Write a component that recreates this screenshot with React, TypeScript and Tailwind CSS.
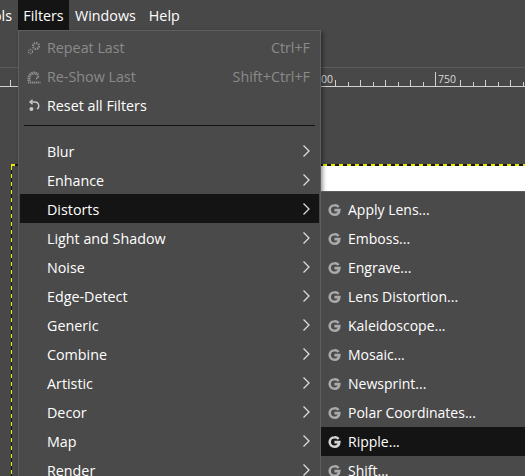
const font = "font-['Open_Sans','Noto_Sans',sans-serif]"

const filterItems = ['Blur', 'Enhance', 'Distorts', 'Light and Shadow', 'Noise', 'Edge-Detect', 'Generic', 'Combine', 'Artistic', 'Decor', 'Map', 'Render']
const distortItems = ['Apply Lens...', 'Emboss...', 'Engrave...', 'Lens Distortion...', 'Kaleidoscope...', 'Mosaic...', 'Newsprint...', 'Polar Coordinates...', 'Ripple...', 'Shift...']

function GimpG({ active }: { active: boolean }) {
  return (
    <svg width="13" height="12" viewBox="0 0 13 12" fill="none" className="shrink-0">
      <path d="M10.6 3A4.6 4.6 0 0 0 6.6 1.3C3.9 1.3 1.7 3.4 1.7 6s2.1 4.7 4.8 4.7c2.6 0 4.6-1.7 4.8-4.6H6.4" stroke={active ? '#d4d4d4' : '#aaaaaa'} strokeWidth="2.6" />
    </svg>
  )
}

function Chevron() {
  return (
    <svg width="8" height="14" viewBox="0 0 8 14" fill="none" className="shrink-0">
      <path d="M1.5 1.5l5.5 5.5-5.5 5.5" stroke="#dcdcdc" strokeWidth="1.3" />
    </svg>
  )
}

function GearIcon() {
  return (
    <svg width="14" height="14" viewBox="0 0 14 14" fill="none">
      <circle cx="9" cy="5" r="3" stroke="#8a8a8a" strokeWidth="2.2" strokeDasharray="1.5 0.8" />
      <circle cx="3.5" cy="10.5" r="2" stroke="#8a8a8a" strokeWidth="1.5" strokeDasharray="1.2 0.8" />
    </svg>
  )
}

function ReshowIcon() {
  return (
    <svg width="14" height="14" viewBox="0 0 14 14" fill="none">
      <path d="M2 11V8a5 5 0 0 1 5-5 5 5 0 0 1 4 2" stroke="#8e8e8e" strokeWidth="3" strokeDasharray="1.4 0.6" />
      <path d="M1 12.5h12.5" stroke="#8e8e8e" strokeWidth="2" strokeDasharray="1.4 0.6" />
      <path d="M9 9l3-3" stroke="#8e8e8e" strokeWidth="1.5" />
    </svg>
  )
}

function ResetIcon() {
  return (
    <svg width="14" height="14" viewBox="0 0 14 14" fill="none">
      <path d="M3 3h4.8a3.8 3.8 0 0 1 2.2 7" stroke="#c8c8c8" strokeWidth="1.4" />
      <path d="M5.6 0.8 3 3l2.6 2.2" stroke="#c8c8c8" strokeWidth="1.4" />
      <circle cx="4.4" cy="10" r="2" fill="#c8c8c8" />
    </svg>
  )
}

function Ruler() {
  const ticks = Array.from({ length: 16 }, (_, i) => 335 + i * 12.5).filter((x) => x !== 447.5)
  return (
    <svg width="525" height="19" className="block">
      <line x1="0" y1="18.5" x2="525" y2="18.5" stroke="#d0d0d0" />
      <line x1="10.5" y1="12" x2="10.5" y2="18" stroke="#d0d0d0" />
      {ticks.map((x) => (
        <line key={x} x1={Math.round(x) + 0.5} y1={x === 435 ? 4 : Math.round((x - 335) / 12.5) % 2 === 0 ? 12 : 14} x2={Math.round(x) + 0.5} y2="18" stroke="#d0d0d0" />
      ))}
      <text x="321" y="15" fontSize="10.5" fill="#d8d8d8" fontFamily="Open Sans">00</text>
      <text x="438" y="15" fontSize="10.5" fill="#d8d8d8" fontFamily="Open Sans">750</text>
    </svg>
  )
}

export default function App() {
  return (
    <div className={`relative h-[476px] w-[525px] overflow-hidden bg-[#484848] text-[14.3px] text-white ${font}`}>
      {/* menubar */}
      <div className="flex h-[30px] items-center pt-[1px]">
        <span className="mr-[6px] flex w-[12px] justify-end overflow-hidden">
          <span className="shrink-0">ols</span>
        </span>
        <span className="-mt-[1px] flex h-[30px] w-[51px] items-center justify-center bg-[#141414] pt-[1px]">Filters</span>
        <span className="ml-[6px]">Windows</span>
        <span className="ml-[13px]">Help</span>
      </div>

      {/* workspace behind the menus */}
      <div className="mt-[37px] border-t border-[#5c5c5c]">
        <Ruler />
      </div>
      <div className="ml-[11px] mt-[77px]">
        <div className="h-[2px] bg-[repeating-linear-gradient(90deg,#e8e800_0_4px,#141414_4px_8px)]" />
        <div className="flex h-[320px]">
          <div className="w-px bg-[repeating-linear-gradient(180deg,#e8e800_0_4px,#141414_4px_8px)]" />
          <div className="ml-[308px] h-[25px] flex-1 bg-white" />
        </div>
      </div>

      {/* Filters menu */}
      <div className="absolute left-[18px] top-[30px] w-[303px] border border-[#5e5e5e] bg-[#4a4a4a] px-px pt-[2px] shadow-[2px_2px_4px_rgba(0,0,0,0.4)]">
        <div className="flex h-[29px] items-center pl-[7px] pr-[9px] text-[#8a8a8a]">
          <span className="w-[20px]"><GearIcon /></span>
          <span className="flex-1">Repeat Last</span>
          <span>Ctrl+F</span>
        </div>
        <div className="flex h-[29px] items-center pl-[7px] pr-[9px] text-[#8a8a8a]">
          <span className="w-[20px]"><ReshowIcon /></span>
          <span className="flex-1">Re-Show Last</span>
          <span>Shift+Ctrl+F</span>
        </div>
        <div className="flex h-[29px] items-center pl-[7px] pr-[9px]">
          <span className="w-[20px]"><ResetIcon /></span>
          <span>Reset all Filters</span>
        </div>
        <div className="mx-[4px] mb-[10px] mt-[5px] h-px bg-[#141414]" />
        {filterItems.map((item) => (
          <div key={item} className={`flex h-[29px] items-center pl-[27px] pr-[9px] ${item === 'Distorts' ? 'bg-[#141414]' : ''}`}>
            <span className="flex-1 pt-[2px]">{item}</span>
            <Chevron />
          </div>
        ))}
      </div>

      {/* Distorts submenu */}
      <div className="absolute left-[320px] top-[191px] w-[220px] border border-[#5e5e5e] bg-[#4a4a4a] pt-[3px] text-[14px]">
        {distortItems.map((item) => (
          <div key={item} className={`flex h-[29px] items-center gap-[7px] pl-[7px] ${item === 'Ripple...' ? 'bg-[#141414]' : ''}`}>
            <GimpG active={item === 'Ripple...'} />
            <span>{item}</span>
          </div>
        ))}
      </div>
    </div>
  )
}
